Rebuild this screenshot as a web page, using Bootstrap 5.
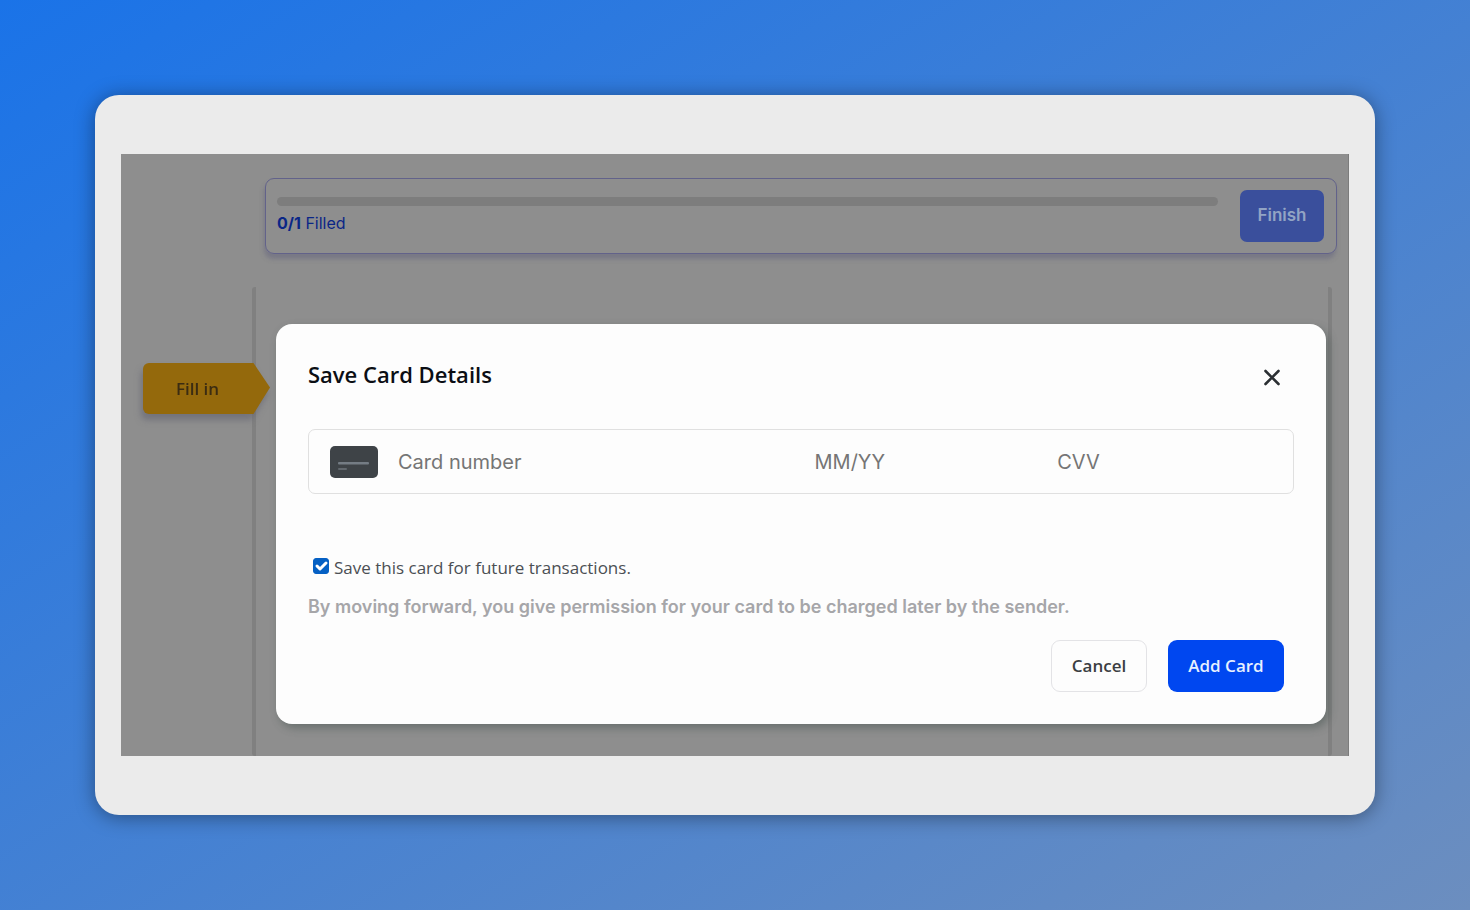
<!DOCTYPE html>
<html lang="en">
<head>
<meta charset="utf-8">
<meta name="viewport" content="width=device-width, initial-scale=1">
<title>Save Card Details</title>
<link href="https://cdn.jsdelivr.net/npm/bootstrap@5.3.0/dist/css/bootstrap.min.css" rel="stylesheet">
<style>
  body {
    background: linear-gradient(to bottom right, #1a73e8 0%, #6c8ebf 100%) no-repeat;
    padding: 95px;
    font-family: "Open Sans", "Noto Sans", sans-serif;
  }
  .frame {
    background: #ebebeb;
    border-radius: 24px;
    padding: 59px 26px;
    box-shadow: 0 2px 20px rgba(0, 0, 0, .4);
  }
  .stage {
    background: #8e8e8e;
    padding-top: 24px;
    box-shadow: inset -1px 0 #7c7c7c;
  }
  .progress-panel {
    margin: 0 12px 0 144px;
    padding: 11px 12px 11px 11px;
    gap: 22px;
    border: 1px solid #62628a;
    border-radius: 9px;
    box-shadow: -1px 5px 4px rgba(100, 100, 125, .5);
    font: 16px/24px Inter, sans-serif;
    color: #0a2687;
  }
  .track {
    height: 9px;
    margin: 7px 0 5px;
    border-radius: 5px;
    background: #7d7d7d;
  }
  .btn-finish {
    width: 84px;
    height: 52px;
    border-radius: 7px;
    background: #3a4f9c;
    color: #92a4c4;
    font-size: 17px;
    font-weight: 600;
    padding: 0;
  }
  .sheet {
    margin: 33px 17px 0 131px;
    border: solid #808080;
    border-width: 0 4px;
    border-radius: 3px;
  }
  .tag-wrap {
    left: 22px;
    top: 209px;
    filter: drop-shadow(-2px 6px 3px rgba(90, 90, 105, .5));
  }
  .btn-tag {
    width: 127px;
    height: 51px;
    padding: 0 18px 0 0;
    border-radius: 6px 0 0 6px;
    background: #94690c;
    color: #3b2c12;
    font-size: 17px;
    font-weight: 600;
    clip-path: polygon(0 0, 87% 0, 100% 48%, 87% 100%, 0 100%);
  }
  .dialog {
    left: 155px;
    right: 23px;
    top: 170px;
    padding: 30px 32px 32px;
    border-radius: 16px;
    background: #fdfdfd;
    box-shadow: 3px 4px 8px rgba(60, 75, 70, .45);
  }
  .dialog-title {
    font-size: 22px;
    line-height: 40px;
    font-weight: 600;
    color: #0b0e14;
  }
  .btn-x {
    width: 44px;
    height: 46px;
  }
  .card-field {
    margin-top: 29px;
    height: 65px;
    padding: 0 21px;
    display: grid;
    grid-template-columns: 48px 397fr 223fr 215fr;
    column-gap: 20px;
    align-items: center;
    border: 1px solid #e0e0e0;
    border-radius: 7px;
  }
  .card-field input {
    width: 100%;
    border: 0;
    padding: 0;
    background: transparent;
    font: 20px/30px Inter, sans-serif;
    color: #222;
  }
  .card-field input::placeholder { color: #757575; opacity: 1; }
  .save-row {
    margin-top: 62px;
    padding-left: 5px;
    gap: 5px;
    font-size: 17px;
    line-height: 24px;
    color: #4b4f54;
  }
  .save-row .form-check-input {
    width: 16px;
    height: 16px;
    margin: 2px 0 0;
    border-radius: 3px;
  }
  .save-row .form-check-input:checked {
    background-color: #0560c4;
    border-color: #0560c4;
    background-size: 20px;
  }
  .consent {
    margin: 15px 0 21px;
    font: 600 18px/24px Inter, sans-serif;
    color: #a6a6a9;
  }
  .actions { gap: 21px; padding-right: 10px; }
  .actions .btn {
    height: 52px;
    padding: 0;
    border-radius: 9px;
    font-size: 17px;
    font-weight: 600;
  }
  .btn-cancel { width: 96px; border: 1px solid #e3e3e6; color: #3b3e42; }
  .btn-add { width: 116px; background: #0047f0; color: #e6f0ff; }
</style>
</head>
<body class="min-vh-100 d-flex m-0">
<main class="frame flex-grow-1 d-flex">
  <div class="stage flex-grow-1 position-relative d-flex flex-column">
    <section class="progress-panel d-flex">
      <div class="flex-grow-1">
        <div class="track" role="progressbar" aria-label="Fields filled" aria-valuenow="0" aria-valuemin="0" aria-valuemax="1"></div>
        <div><b>0/1</b> Filled</div>
      </div>
      <button type="button" class="btn btn-finish">Finish</button>
    </section>
    <div class="sheet flex-grow-1"></div>

    <div class="tag-wrap position-absolute">
      <button type="button" class="btn btn-tag border-0">Fill in</button>
    </div>

    <form class="dialog position-absolute" role="dialog" aria-labelledby="dialog-title">
      <div class="d-flex justify-content-between">
        <h1 id="dialog-title" class="dialog-title m-0">Save Card Details</h1>
        <button type="button" class="btn btn-x border-0 p-0 d-flex align-items-center justify-content-center" aria-label="Close">
          <svg width="18" height="18" viewBox="0 0 18 18" fill="none" stroke="#2b2f33" stroke-width="2.6" stroke-linecap="round"><path d="M2.500 3l13 13M15.500 3L2.500 16"/></svg>
        </button>
      </div>
      <div class="card-field">
        <svg width="48" height="32" viewBox="0 0 48 32"><rect width="48" height="32" rx="5" fill="#3e4347"/><rect x="8" y="16" width="31" height="2.400" rx="1" fill="#747c84"/><rect x="8" y="22" width="9" height="2" rx="1" fill="#62686e"/></svg>
        <input type="text" placeholder="Card number" aria-label="Card number">
        <input type="text" placeholder="MM/YY" aria-label="Expiry date">
        <input type="text" placeholder="CVV" aria-label="CVV">
      </div>
      <div class="save-row d-flex">
        <input class="form-check-input" type="checkbox" id="save-card" checked>
        <label for="save-card">Save this card for future transactions.</label>
      </div>
      <p class="consent">By moving forward, you give permission for your card to be charged later by the sender.</p>
      <div class="actions d-flex justify-content-end">
        <button type="button" class="btn btn-cancel">Cancel</button>
        <button type="submit" class="btn btn-add border-0">Add Card</button>
      </div>
    </form>
  </div>
</main>
<script src="https://cdn.jsdelivr.net/npm/bootstrap@5.3.0/dist/js/bootstrap.bundle.min.js"></script>
</body>
</html>
